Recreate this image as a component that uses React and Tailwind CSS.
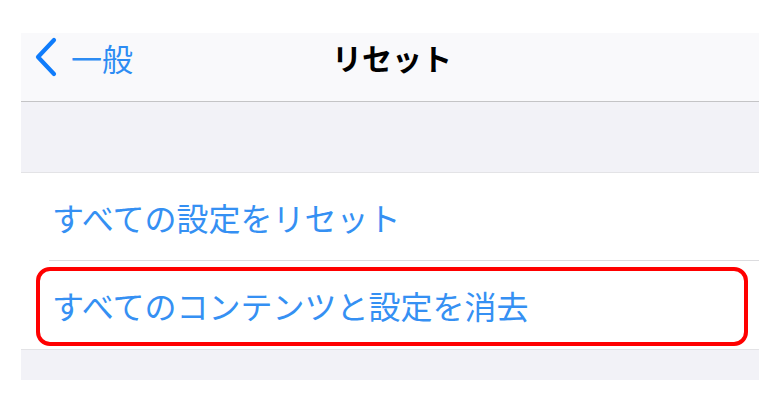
const font = { fontFamily: '"Noto Sans CJK JP", "Noto Sans", sans-serif' }

export default function App() {
  return (
    <div className="min-h-[417px] w-[782px] bg-white pt-[33px] pl-[21px]" style={font}>
      <div className="w-[738px]">
        {/* Nav bar */}
        <div className="relative flex h-[69px] items-center border-b border-[#c4c4c6] bg-[#f9f9fb] pb-[20px]">
          <div className="flex items-center pl-[12px] text-[#2d8cf3]">
            <svg width="26" height="40" viewBox="0 0 26 40" className="mr-[12px]">
              <path d="M21 3 L5 20 L21 37" fill="none" stroke="#0f7cfb" strokeWidth="4.2" strokeLinecap="round" strokeLinejoin="round" />
            </svg>
            <span className="text-[31px] leading-none">一般</span>
          </div>
          <div className="absolute inset-x-0 top-0 bottom-[20px] flex items-center justify-center">
            <span className="ml-[4px] text-[30px] font-bold leading-none text-black">リセット</span>
          </div>
        </div>

        {/* Spacer */}
        <div className="h-[71px] border-b border-[#e3e3e6] bg-[#f2f2f7]" />

        {/* List */}
        <div className="bg-white">
          <div className="flex h-[88px] items-center pl-[28px]">
            <div className="flex h-full flex-1 items-center border-b border-[#dcdcdf] pl-[3px]">
              <span className="text-[32px] leading-none text-[#3590f3]">すべての設定をリセット</span>
            </div>
          </div>
          <div className="relative flex h-[88px] items-center pl-[31px]">
            <span className="text-[32px] leading-none text-[#3590f3]">すべてのコンテンツと設定を消去</span>
            <div className="absolute left-[15px] top-[6px] h-[79px] w-[712px] rounded-[14px] border-[4px] border-[#ff0000]" />
          </div>
        </div>

        <div className="h-[31px] border-t border-[#e3e3e6] bg-[#f2f2f7]" />
      </div>
    </div>
  )
}
